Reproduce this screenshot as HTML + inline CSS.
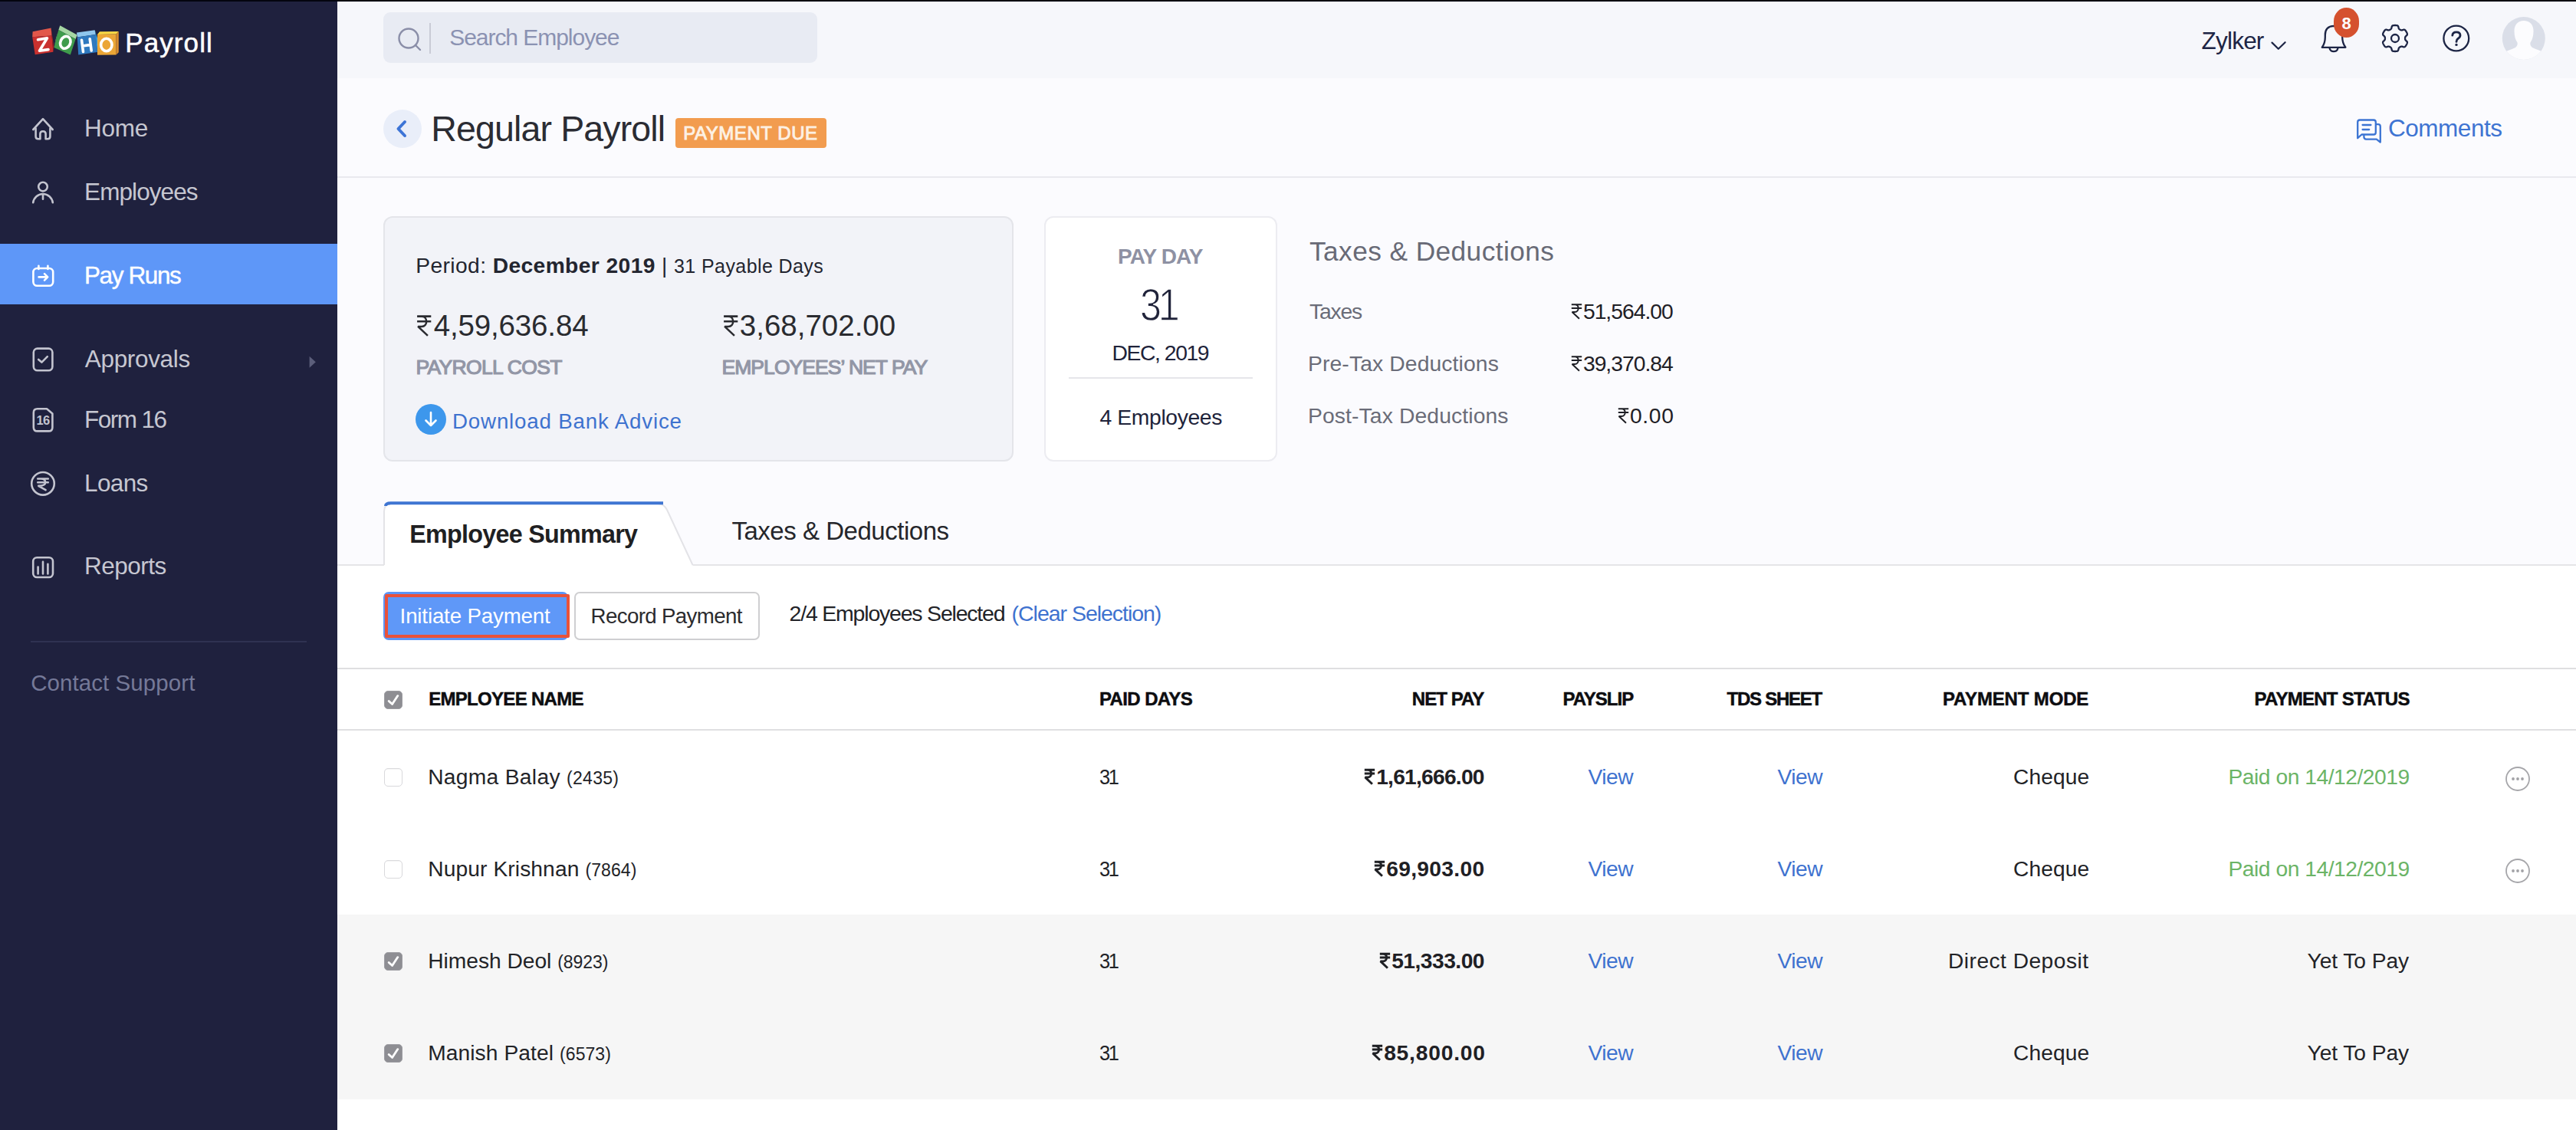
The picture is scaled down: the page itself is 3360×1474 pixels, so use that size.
<!DOCTYPE html>
<html><head><meta charset="utf-8"><title>Zoho Payroll - Regular Payroll</title>
<style>
html,body{margin:0;padding:0;}
body{width:3360px;height:1474px;overflow:hidden;background:#fff;font-family:"Liberation Sans",sans-serif;}
#root{position:relative;width:3360px;height:1474px;overflow:hidden;background:#fff;}
.t{position:absolute;white-space:nowrap;line-height:1;}
.b{position:absolute;box-sizing:border-box;}
svg{position:absolute;overflow:visible;}
.ru{position:static;display:inline-block;height:0.70em;width:0.53em;margin-right:0.05em;vertical-align:baseline;overflow:visible;}
.ic{fill:none;stroke:#c3c4cf;stroke-width:2.6;stroke-linecap:round;stroke-linejoin:round;}
.tb{fill:none;stroke:#1d2545;stroke-width:2.6;stroke-linecap:round;stroke-linejoin:round;}
</style></head><body><div id="root">

<!-- base regions -->
<div class="b" style="left:440px;top:0;width:2920px;height:102px;background:#f6f7fb;"></div>
<div class="b" style="left:440px;top:102px;width:2920px;height:635px;background:#fbfbfe;"></div>
<div class="b" style="left:440px;top:230px;width:2920px;height:2px;background:#e9e9ee;"></div>
<div class="b" style="left:440px;top:736px;width:2920px;height:2px;background:#e5e5e8;"></div>
<div class="b" style="left:440px;top:871px;width:2920px;height:2px;background:#dfdfe1;"></div>
<div class="b" style="left:440px;top:951px;width:2920px;height:2px;background:#dfdfe1;"></div>
<div class="b" style="left:440px;top:1193px;width:2920px;height:241px;background:#f6f6f6;"></div>
<!-- sidebar -->
<div class="b" style="left:0;top:0;width:440px;height:1474px;background:#1f213e;"></div>
<div class="b" style="left:0;top:318px;width:440px;height:79px;background:#5e97f8;"></div>
<div class="b" style="left:40px;top:836px;width:360px;height:2px;background:#2f3252;"></div>
<div class="b" style="left:0;top:0;width:3360px;height:2px;background:#04050f;"></div>
<!-- search -->
<div class="b" style="left:500px;top:16px;width:566px;height:66px;border-radius:9px;background:#e8ebf3;"></div>
<div class="b" style="left:560px;top:30px;width:2px;height:40px;background:#c9cbd6;"></div>
<svg style="left:516px;top:32px" width="40" height="40" viewBox="0 0 40 40"><circle cx="17" cy="18" r="12.5" fill="none" stroke="#8a8ea8" stroke-width="2.4"/><path d="M26 27 L32 33" stroke="#8a8ea8" stroke-width="2.4" stroke-linecap="round"/></svg>
<!-- back btn -->
<div class="b" style="left:500px;top:143px;width:50px;height:50px;border-radius:25px;background:#e9eef9;"></div>
<svg style="left:500px;top:143px" width="50" height="50" viewBox="0 0 50 50"><path d="M28 16 L19.5 25 L28 34" fill="none" stroke="#3d74d6" stroke-width="4" stroke-linecap="round" stroke-linejoin="round"/></svg>
<!-- badge -->
<div class="b" style="left:881px;top:154px;width:197px;height:39px;border-radius:4px;background:#f29c4f;"></div>
<!-- card 1 -->
<div class="b" style="left:500px;top:282px;width:822px;height:320px;border-radius:12px;background:#f2f3f8;border:2px solid #e4e5ea;"></div>
<div class="b" style="left:542px;top:527px;width:40px;height:40px;border-radius:20px;background:#3d97ec;"></div>
<svg style="left:542px;top:527px" width="40" height="40" viewBox="0 0 40 40"><path d="M20 11 V28 M13.5 21.5 L20 28 L26.5 21.5" fill="none" stroke="#fff" stroke-width="2.6" stroke-linecap="round" stroke-linejoin="round"/></svg>
<!-- card 2 -->
<div class="b" style="left:1362px;top:282px;width:304px;height:320px;border-radius:12px;background:#fff;border:2px solid #ececf1;"></div>
<div class="b" style="left:1394px;top:492px;width:240px;height:2px;background:#e6e6ea;"></div>
<!-- tab -->
<svg style="left:440px;top:640px" width="600" height="110" viewBox="440 640 600 110">
<path d="M501 738 L501 667 Q501 657 511 657 L858 657 Q866 657 870 665 L903.5 737 L903.5 739 L501 739 Z" fill="#fff" stroke="none"/>
<path d="M501 737 L501 667 Q501 657 511 657 L858 657 Q866 657 870 665 L903.5 737" fill="none" stroke="#e3e3e7" stroke-width="2"/>
<path d="M503 660 Q503 656.2 510 656.2 L865 656.2" fill="none" stroke="#3f75d2" stroke-width="4"/>
</svg>
<!-- buttons -->
<div class="b" style="left:500px;top:772px;width:241px;height:63px;border-radius:7px;background:#5b95f7;"></div>
<div class="b" style="left:502px;top:775px;width:241px;height:57px;border:4.5px solid #e9523a;border-radius:2px;background:#5f98f8;"></div>
<div class="b" style="left:749px;top:772px;width:242px;height:63px;border-radius:7px;background:#fff;border:2px solid #cfcfd1;"></div>

<!-- ZOHO logo -->
<svg style="left:0;top:0" width="300" height="100" viewBox="0 0 300 100">
 <!-- red -->
 <polygon points="42.6,41.3 66.6,36.4 67.5,46.5 42.2,48.3" fill="#e2574a"/>
 <polygon points="42.2,48.3 67.5,46.5 69.4,67.8 45.7,71.3" fill="#c9312f"/>
 <polygon points="66.6,36.4 67.5,46.5 69.4,67.8 70.2,60 " fill="#a3211f"/>
 <!-- green -->
 <polygon points="78.3,33.2 100.6,45.4 98.6,51 76.4,39" fill="#a5d6a3"/>
 <polygon points="78.3,33.2 76.4,39 70.4,61.9 73,50" fill="#7cc47d"/>
 <polygon points="76.4,39 98.6,51 91.8,71.6 70.4,61.9" fill="#3f9c4c"/>
 <!-- blue -->
 <polygon points="100,42.6 123.7,39.2 124.6,45 100.8,48.4" fill="#8fc6ed"/>
 <polygon points="100.8,48.4 124.6,45 127,68 102.2,71.6" fill="#2f79bf"/>
 <polygon points="123.7,39.2 124.6,45 127,68 127,50" fill="#3aa0de"/>
 <!-- yellow -->
 <polygon points="127,45 130,41.2 154.8,41 151.5,44.6" fill="#f9d845"/>
 <polygon points="127,45 151.5,44.6 151.5,71.4 127,71.7" fill="#eba636"/>
 <polygon points="151.5,44.6 154.8,41 154.8,68.2 151.5,71.4" fill="#d68b2d"/>
 <g fill="none" stroke="#fff" stroke-width="3.6" stroke-linecap="round" stroke-linejoin="round">
  <path d="M49.5 51.8 L61.5 49.8 L51.5 66.2 L63 64.6"/>
  <ellipse cx="85.3" cy="55.3" rx="6.4" ry="8.2" transform="rotate(24 85.3 55.3)"/>
  <path d="M106.5 52.3 L108.5 67.5 M117.2 50.7 L119.2 66 M107.5 60 L118.2 58.4"/>
  <ellipse cx="138.8" cy="58.5" rx="7.2" ry="8.2"/>
 </g>
</svg>
<!-- sidebar icons -->
<svg style="left:0;top:0" width="440" height="800" viewBox="0 0 440 800">
 <g class="ic">
  <!-- home -->
  <path d="M43.3 169 L56 155.2 L68.7 169"/>
  <path d="M46.6 167.5 V178 Q46.6 181.3 50 181.3 H52.4 V174.6 Q52.4 171.2 56 171.2 Q59.6 171.2 59.6 174.6 V181.3 H62 Q65.4 181.3 65.4 178 V167.5"/>
  <!-- employees -->
  <circle cx="56" cy="243.6" r="5.8"/>
  <path d="M43.2 264.3 A12.9 12.9 0 0 1 68.8 264.3 M56 254.4 V259.8"/>
  <!-- approvals -->
  <rect x="43.8" y="454.6" width="24.6" height="28.6" rx="5"/>
  <path d="M50.2 468.9 L54.4 472.6 L61.8 465.2"/>
  <!-- form 16 -->
  <path d="M48.8 533.2 H61 L68.4 539.6 V557.4 Q68.4 562.4 63.4 562.4 H48.8 Q43.8 562.4 43.8 557.4 V538.2 Q43.8 533.2 48.8 533.2 Z"/>
  <!-- loans -->
  <circle cx="56" cy="630.8" r="14.8"/>
  <path d="M49.2 624.6 H62.8 M49.2 629.2 H62.8 M53.6 624.6 Q59.2 625 59.2 629.2 Q59.2 633.6 50.2 633.8 L59.6 639.2" stroke-width="2.5"/>
  <!-- reports -->
  <rect x="43.2" y="727.2" width="25.8" height="25.8" rx="5"/>
  <path d="M49.6 739.6 V748.4 M56 732.8 V748.4 M62.4 735.8 V748.4"/>
 </g>
 <!-- pay runs -->
 <g class="ic" style="stroke:#fff">
  <rect x="43.4" y="350" width="25.8" height="22.8" rx="5"/>
  <path d="M50.4 346.8 V351 M62.4 346.8 V351 M50.6 361.4 H62 M58 357.2 L62.2 361.4 L58 365.6"/>
 </g>
 <polygon points="403.6,464.8 411.8,472.3 403.6,479.8" fill="#5b5e7a"/>
</svg>
<span class="t" style="left:47.4px;top:540px;font-size:16.5px;font-weight:700;color:#c3c4cf;letter-spacing:-0.5px;">16</span>
<!-- topbar icons -->
<svg style="left:2940px;top:0" width="420" height="100" viewBox="2940 0 420 100">
 <path class="tb" d="M2963.5 55.6 L2971.8 63.8 L2980.6 55.2" style="stroke-width:2.2"/>
 <!-- bell -->
 <path class="tb" d="M3028.8 61.8 H3059.4 Q3055.2 56.4 3055.2 48.6 V45.4 Q3055.2 34.4 3044 33.8 Q3032.8 34.4 3032.8 45.4 V48.6 Q3032.8 56.4 3028.8 61.8 Z M3038.6 63 Q3039.6 67.2 3044 67.2 Q3048.4 67.2 3049.4 63" style="stroke-width:2.3"/>
 <rect x="3044" y="10" width="33" height="39" rx="16.5" ry="17.5" fill="#d5512e"/>
 <!-- gear -->
 <g transform="translate(3124 50)">
  <path class="tb" d="M13.10 0.00 L13.10 0.46 L13.12 0.92 L13.17 1.38 L13.33 1.87 L13.71 2.42 L14.40 3.06 L15.21 3.79 L15.76 4.52 L15.93 5.18 L15.88 5.78 L15.73 6.35 L15.52 6.91 L15.27 7.45 L15.01 7.98 L14.72 8.50 L14.42 9.01 L14.09 9.50 L13.74 9.98 L13.37 10.44 L12.95 10.87 L12.45 11.21 L11.79 11.39 L10.89 11.28 L9.85 10.94 L8.95 10.66 L8.29 10.61 L7.79 10.72 L7.35 10.90 L6.95 11.12 L6.55 11.34 L6.15 11.57 L5.76 11.82 L5.39 12.10 L5.04 12.48 L4.76 13.08 L4.55 14.00 L4.32 15.07 L3.97 15.90 L3.48 16.39 L2.94 16.65 L2.36 16.80 L1.78 16.89 L1.19 16.95 L0.59 16.99 L0.00 17.00 L-0.59 16.99 L-1.19 16.95 L-1.78 16.89 L-2.36 16.80 L-2.94 16.65 L-3.48 16.39 L-3.97 15.90 L-4.32 15.07 L-4.55 14.00 L-4.76 13.08 L-5.04 12.48 L-5.39 12.10 L-5.76 11.82 L-6.15 11.57 L-6.55 11.34 L-6.95 11.12 L-7.35 10.90 L-7.79 10.72 L-8.29 10.61 L-8.95 10.66 L-9.85 10.94 L-10.89 11.28 L-11.79 11.39 L-12.45 11.21 L-12.95 10.87 L-13.37 10.44 L-13.74 9.98 L-14.09 9.50 L-14.42 9.01 L-14.72 8.50 L-15.01 7.98 L-15.27 7.45 L-15.52 6.91 L-15.73 6.35 L-15.88 5.78 L-15.93 5.18 L-15.76 4.52 L-15.21 3.79 L-14.40 3.06 L-13.71 2.42 L-13.33 1.87 L-13.17 1.38 L-13.12 0.92 L-13.10 0.46 L-13.10 0.00 L-13.10 -0.46 L-13.12 -0.92 L-13.17 -1.38 L-13.33 -1.87 L-13.71 -2.42 L-14.40 -3.06 L-15.21 -3.79 L-15.76 -4.52 L-15.93 -5.18 L-15.88 -5.78 L-15.73 -6.35 L-15.52 -6.91 L-15.27 -7.45 L-15.01 -7.98 L-14.72 -8.50 L-14.42 -9.01 L-14.09 -9.50 L-13.74 -9.98 L-13.37 -10.44 L-12.95 -10.87 L-12.45 -11.21 L-11.79 -11.39 L-10.89 -11.28 L-9.85 -10.94 L-8.95 -10.66 L-8.29 -10.61 L-7.79 -10.72 L-7.35 -10.90 L-6.95 -11.12 L-6.55 -11.34 L-6.15 -11.57 L-5.76 -11.82 L-5.39 -12.10 L-5.04 -12.48 L-4.76 -13.08 L-4.55 -14.00 L-4.32 -15.07 L-3.97 -15.90 L-3.48 -16.39 L-2.94 -16.65 L-2.36 -16.80 L-1.78 -16.89 L-1.19 -16.95 L-0.59 -16.99 L-0.00 -17.00 L0.59 -16.99 L1.19 -16.95 L1.78 -16.89 L2.36 -16.80 L2.94 -16.65 L3.48 -16.39 L3.97 -15.90 L4.32 -15.07 L4.55 -14.00 L4.76 -13.08 L5.04 -12.48 L5.39 -12.10 L5.76 -11.82 L6.15 -11.57 L6.55 -11.34 L6.95 -11.12 L7.35 -10.90 L7.79 -10.72 L8.29 -10.61 L8.95 -10.66 L9.85 -10.94 L10.89 -11.28 L11.79 -11.39 L12.45 -11.21 L12.95 -10.87 L13.37 -10.44 L13.74 -9.98 L14.09 -9.50 L14.42 -9.01 L14.72 -8.50 L15.01 -7.98 L15.27 -7.45 L15.52 -6.91 L15.73 -6.35 L15.88 -5.78 L15.93 -5.18 L15.76 -4.52 L15.21 -3.79 L14.40 -3.06 L13.71 -2.42 L13.33 -1.87 L13.17 -1.38 L13.12 -0.92 L13.10 -0.46 Z" style="stroke-width:2.3"/>
  <circle class="tb" cx="0" cy="0" r="5" style="stroke-width:2.3"/>
 </g>
 <!-- help -->
 <circle class="tb" cx="3203.8" cy="50" r="16.4" style="stroke-width:2.3"/>
 <path class="tb" d="M3198.8 46.2 Q3199 41.8 3204 41.8 Q3209 41.8 3209 46 Q3209 48.6 3206.2 50.2 Q3204 51.6 3204 54.4" style="stroke-width:2.8"/>
 <circle cx="3204" cy="58.4" r="1.7" fill="#1d2545"/>
 <!-- avatar -->
 <defs><clipPath id="av"><circle cx="3291.8" cy="50" r="28"/></clipPath></defs>
 <circle cx="3291.8" cy="50" r="28" fill="#dadee8"/>
 <g clip-path="url(#av)" fill="#fcfcfe">
  <path d="M3292 27 C3300 27 3304.5 32.5 3304.5 40.5 C3304.5 47 3303 52 3300.5 55.5 C3300 58 3300.5 60 3303 62 C3308 64.5 3314 66 3318 68.5 L3322 82 H3262 L3266 68.5 C3270 66 3276 64.5 3281 62 C3283.5 60 3284 58 3283.5 55.5 C3281 52 3279.5 47 3279.5 40.5 C3279.5 32.5 3284 27 3292 27 Z"/>
 </g>
</svg>
<!-- comments icon -->
<svg style="left:3060px;top:140px" width="60" height="60" viewBox="3060 140 60 60">
 <g fill="none" stroke="#3c74d3" stroke-width="2.3" stroke-linecap="round" stroke-linejoin="round">
  <path d="M3078 156.5 H3096 Q3098.8 156.5 3098.8 159.3 V172.7 Q3098.8 175.5 3096 175.5 H3080.4 L3075.2 180.2 V159.3 Q3075.2 156.5 3078 156.5 Z"/>
  <path d="M3081.6 163 H3092.4 M3081.6 169 H3090.2"/>
  <path d="M3099.6 162.2 H3102 Q3104.8 162.2 3104.8 165 V185.6 L3099.8 181.6 H3086.4 Q3083.4 181.6 3083.4 178.6 V177"/>
 </g>
</svg>

<!-- checkboxes -->
<div class="b" style="left:501px;top:901px;width:24px;height:24px;border-radius:5px;background:#8e8e93;border:1px solid #9d9da2;"></div>
<svg style="left:501px;top:901px" width="24" height="24" viewBox="0 0 24 24"><path d="M6.2 13.4 L10.6 17.6 L17.8 6.6" fill="none" stroke="#fff" stroke-width="2.8" stroke-linecap="round" stroke-linejoin="round"/></svg>
<div class="b" style="left:501px;top:1002px;width:24px;height:24px;border-radius:5px;background:#fff;border:1.5px solid #d9d9dc;box-shadow:inset 0 1px 1px rgba(0,0,0,0.04);"></div>
<div class="b" style="left:501px;top:1122px;width:24px;height:24px;border-radius:5px;background:#fff;border:1.5px solid #d9d9dc;box-shadow:inset 0 1px 1px rgba(0,0,0,0.04);"></div>
<div class="b" style="left:501px;top:1242px;width:24px;height:24px;border-radius:5px;background:#8e8e93;border:1px solid #9d9da2;"></div>
<svg style="left:501px;top:1242px" width="24" height="24" viewBox="0 0 24 24"><path d="M6.2 13.4 L10.6 17.6 L17.8 6.6" fill="none" stroke="#fff" stroke-width="2.8" stroke-linecap="round" stroke-linejoin="round"/></svg>
<div class="b" style="left:501px;top:1362px;width:24px;height:24px;border-radius:5px;background:#8e8e93;border:1px solid #9d9da2;"></div>
<svg style="left:501px;top:1362px" width="24" height="24" viewBox="0 0 24 24"><path d="M6.2 13.4 L10.6 17.6 L17.8 6.6" fill="none" stroke="#fff" stroke-width="2.8" stroke-linecap="round" stroke-linejoin="round"/></svg>
<!-- more buttons -->
<svg style="left:3264px;top:996px" width="40" height="40" viewBox="0 0 40 40"><circle cx="20" cy="20" r="15" fill="#fff" stroke="#a6a6aa" stroke-width="1.8"/><circle cx="14" cy="20" r="1.9" fill="#a2a2a6"/><circle cx="20" cy="20" r="1.9" fill="#a2a2a6"/><circle cx="26" cy="20" r="1.9" fill="#a2a2a6"/></svg>
<svg style="left:3264px;top:1116px" width="40" height="40" viewBox="0 0 40 40"><circle cx="20" cy="20" r="15" fill="#fff" stroke="#a6a6aa" stroke-width="1.8"/><circle cx="14" cy="20" r="1.9" fill="#a2a2a6"/><circle cx="20" cy="20" r="1.9" fill="#a2a2a6"/><circle cx="26" cy="20" r="1.9" fill="#a2a2a6"/></svg>

<span class="t" style="left:163.3px;top:37.57px;font-size:35px;color:#ffffff;letter-spacing:1.08px;-webkit-text-stroke:0.5px #fff;">Payroll</span>
<span class="t" style="left:110.0px;top:152.33px;font-size:31.5px;color:#c6c7d1;letter-spacing:-0.23px;">Home</span>
<span class="t" style="left:110.1px;top:235.33px;font-size:31.5px;color:#c6c7d1;letter-spacing:-0.93px;">Employees</span>
<span class="t" style="left:110.0px;top:343.73px;font-size:31.5px;color:#ffffff;letter-spacing:-1.40px;-webkit-text-stroke:0.4px #fff;">Pay Runs</span>
<span class="t" style="left:110.8px;top:453.33px;font-size:31.5px;color:#c6c7d1;letter-spacing:-0.34px;">Approvals</span>
<span class="t" style="left:110.0px;top:531.93px;font-size:31.5px;color:#c6c7d1;letter-spacing:-1.53px;">Form 16</span>
<span class="t" style="left:110.0px;top:615.33px;font-size:31.5px;color:#c6c7d1;letter-spacing:-0.62px;">Loans</span>
<span class="t" style="left:110.0px;top:722.83px;font-size:31.5px;color:#c6c7d1;letter-spacing:-0.50px;">Reports</span>
<span class="t" style="left:40.2px;top:876.02px;font-size:29.5px;color:#757998;letter-spacing:0.07px;">Contact Support</span>
<span class="t" style="left:586.2px;top:33.60px;font-size:30px;color:#8b92b2;letter-spacing:-1.04px;">Search Employee</span>
<span class="t" style="left:2871.6px;top:38.33px;font-size:31.5px;color:#1d2545;letter-spacing:-0.80px;">Zylker</span>
<span class="t" style="left:3054.4px;top:19.57px;font-size:22px;color:#ffffff;font-weight:700;">8</span>
<span class="t" style="left:562.3px;top:145.03px;font-size:46.5px;color:#2b2c33;letter-spacing:-0.86px;">Regular Payroll</span>
<span class="t" style="left:891.2px;top:161.58px;font-size:24px;color:#fdf1e4;letter-spacing:0.55px;-webkit-text-stroke:0.9px #fdf1e4;">PAYMENT DUE</span>
<span class="t" style="left:3115.0px;top:152.23px;font-size:31.5px;color:#3e74d2;letter-spacing:-0.47px;">Comments</span>
<span class="t" style="left:542.2px;top:331.62px;font-size:28.2px;color:#23252f;letter-spacing:0.41px;">Period: <b>December 2019</b> | <span style="font-size:25px">31 Payable Days</span></span>
<span class="t" style="left:543.4px;top:405.60px;font-size:38.5px;color:#2a2b30;letter-spacing:-0.15px;"><svg class="ru" viewBox="0 0 56 74"><path d="M3 4.5 H53 M3 22.5 H53 M12 4.5 H19 C42 4.5 42 41 19 41 H6 L41 74" fill="none" stroke="currentColor" stroke-width="7" stroke-linejoin="bevel"/></svg>4,59,636.84</span>
<span class="t" style="left:942.5px;top:405.60px;font-size:38.5px;color:#2a2b30;"><svg class="ru" viewBox="0 0 56 74"><path d="M3 4.5 H53 M3 22.5 H53 M12 4.5 H19 C42 4.5 42 41 19 41 H6 L41 74" fill="none" stroke="currentColor" stroke-width="7" stroke-linejoin="bevel"/></svg>3,68,702.00</span>
<span class="t" style="left:542.4px;top:465.56px;font-size:26.5px;color:#9296a6;letter-spacing:-0.66px;-webkit-text-stroke:1.2px #9296a6;">PAYROLL COST</span>
<span class="t" style="left:941.5px;top:465.56px;font-size:26.5px;color:#9296a6;letter-spacing:-0.94px;-webkit-text-stroke:1.2px #9296a6;">EMPLOYEES&#8217; NET PAY</span>
<span class="t" style="left:590.0px;top:536.30px;font-size:27.7px;color:#3e72cf;letter-spacing:0.83px;">Download Bank Advice</span>
<span class="t" style="left:1458.0px;top:320.69px;font-size:28px;color:#8e91a3;font-weight:700;letter-spacing:-0.88px;">PAY DAY</span>
<span class="t" style="left:1487.2px;top:367.80px;font-size:60px;color:#20233a;letter-spacing:-5px;transform:scaleX(0.84);transform-origin:left center;-webkit-text-stroke:1.3px #fff;">31</span>
<span class="t" style="left:1450.6px;top:446.04px;font-size:28.3px;color:#20233a;letter-spacing:-1.44px;">DEC, 2019</span>
<span class="t" style="left:1434.5px;top:530.34px;font-size:28.3px;color:#20233a;letter-spacing:-0.38px;">4 Employees</span>
<span class="t" style="left:1708.0px;top:309.71px;font-size:35.3px;color:#686a76;letter-spacing:0.41px;">Taxes &amp; Deductions</span>
<span class="t" style="left:1708.0px;top:391.84px;font-size:28.3px;color:#6a6c78;letter-spacing:-1.18px;">Taxes</span>
<span class="t" style="left:1706.0px;top:459.84px;font-size:28.3px;color:#6a6c78;letter-spacing:0.11px;">Pre-Tax Deductions</span>
<span class="t" style="left:1706.0px;top:528.04px;font-size:28.3px;color:#6a6c78;letter-spacing:0.11px;">Post-Tax Deductions</span>
<span class="t" style="left:2048.5px;top:391.84px;font-size:28.3px;color:#1f2026;letter-spacing:-1.00px;"><svg class="ru" viewBox="0 0 56 74"><path d="M3 4.5 H53 M3 22.5 H53 M12 4.5 H19 C42 4.5 42 41 19 41 H6 L41 74" fill="none" stroke="currentColor" stroke-width="7.5" stroke-linejoin="bevel"/></svg>51,564.00</span>
<span class="t" style="left:2048.5px;top:459.84px;font-size:28.3px;color:#1f2026;letter-spacing:-1.00px;"><svg class="ru" viewBox="0 0 56 74"><path d="M3 4.5 H53 M3 22.5 H53 M12 4.5 H19 C42 4.5 42 41 19 41 H6 L41 74" fill="none" stroke="currentColor" stroke-width="7.5" stroke-linejoin="bevel"/></svg>39,370.84</span>
<span class="t" style="left:2109.5px;top:528.04px;font-size:28.3px;color:#1f2026;letter-spacing:0.67px;"><svg class="ru" viewBox="0 0 56 74"><path d="M3 4.5 H53 M3 22.5 H53 M12 4.5 H19 C42 4.5 42 41 19 41 H6 L41 74" fill="none" stroke="currentColor" stroke-width="7.5" stroke-linejoin="bevel"/></svg>0.00</span>
<span class="t" style="left:534.2px;top:680.85px;font-size:32.3px;color:#1f1f22;font-weight:700;letter-spacing:-0.73px;">Employee Summary</span>
<span class="t" style="left:954.4px;top:675.86px;font-size:33px;color:#25262b;letter-spacing:-0.47px;">Taxes &amp; Deductions</span>
<span class="t" style="left:521.6px;top:789.95px;font-size:27.7px;color:#ffffff;letter-spacing:-0.16px;">Initiate Payment</span>
<span class="t" style="left:770.6px;top:789.95px;font-size:27.7px;color:#2b2b2e;letter-spacing:-0.65px;">Record Payment</span>
<span class="t" style="left:1029.6px;top:786.07px;font-size:28.5px;color:#222327;letter-spacing:-1.21px;">2/4 Employees Selected</span>
<span class="t" style="left:1319.6px;top:786.07px;font-size:28.5px;color:#3e72cf;letter-spacing:-1.03px;">(Clear Selection)</span>
<span class="t" style="left:559.2px;top:899.68px;font-size:24px;color:#0d0d10;font-weight:700;letter-spacing:-0.70px;-webkit-text-stroke:0.5px #0d0d10;">EMPLOYEE NAME</span>
<span class="t" style="left:1434.0px;top:899.68px;font-size:24px;color:#0d0d10;font-weight:700;letter-spacing:-0.62px;-webkit-text-stroke:0.5px #0d0d10;">PAID DAYS</span>
<span class="t" style="left:1841.8px;top:899.68px;font-size:24px;color:#0d0d10;font-weight:700;letter-spacing:-0.92px;-webkit-text-stroke:0.5px #0d0d10;">NET PAY</span>
<span class="t" style="left:2038.5px;top:899.68px;font-size:24px;color:#0d0d10;font-weight:700;letter-spacing:-1.00px;-webkit-text-stroke:0.5px #0d0d10;">PAYSLIP</span>
<span class="t" style="left:2252.5px;top:899.68px;font-size:24px;color:#0d0d10;font-weight:700;letter-spacing:-1.25px;-webkit-text-stroke:0.5px #0d0d10;">TDS SHEET</span>
<span class="t" style="left:2534.0px;top:899.68px;font-size:24px;color:#0d0d10;font-weight:700;letter-spacing:-0.15px;-webkit-text-stroke:0.5px #0d0d10;">PAYMENT MODE</span>
<span class="t" style="left:2940.5px;top:899.68px;font-size:24px;color:#0d0d10;font-weight:700;letter-spacing:-0.73px;-webkit-text-stroke:0.5px #0d0d10;">PAYMENT STATUS</span>
<span class="t" style="left:558.2px;top:998.72px;font-size:28.2px;color:#222327;letter-spacing:0.31px;">Nagma Balay <span style="font-size:23px">(2435)</span></span>
<span class="t" style="left:1434.0px;top:998.72px;font-size:28.2px;color:#222327;letter-spacing:-2.5px;transform:scaleX(0.9);transform-origin:left center;">31</span>
<span class="t" style="left:1778.8px;top:998.72px;font-size:28.2px;color:#1f2024;font-weight:700;letter-spacing:-0.75px;"><svg class="ru" viewBox="0 0 56 74"><path d="M3 4.5 H53 M3 22.5 H53 M12 4.5 H19 C42 4.5 42 41 19 41 H6 L41 74" fill="none" stroke="currentColor" stroke-width="11" stroke-linejoin="bevel"/></svg>1,61,666.00</span>
<span class="t" style="left:2071.5px;top:998.72px;font-size:28.2px;color:#3e72cf;letter-spacing:-0.50px;">View</span>
<span class="t" style="left:2318.5px;top:998.72px;font-size:28.2px;color:#3e72cf;letter-spacing:-0.50px;">View</span>
<span class="t" style="left:2626.0px;top:998.72px;font-size:28.2px;color:#222327;letter-spacing:0.10px;">Cheque</span>
<span class="t" style="left:2906.5px;top:998.72px;font-size:28.2px;color:#6bb466;letter-spacing:-0.46px;">Paid on 14/12/2019</span>
<span class="t" style="left:558.2px;top:1118.72px;font-size:28.2px;color:#222327;letter-spacing:0.10px;">Nupur Krishnan <span style="font-size:23px">(7864)</span></span>
<span class="t" style="left:1434.0px;top:1118.72px;font-size:28.2px;color:#222327;letter-spacing:-2.5px;transform:scaleX(0.9);transform-origin:left center;">31</span>
<span class="t" style="left:1791.8px;top:1118.72px;font-size:28.2px;color:#1f2024;font-weight:700;letter-spacing:0.32px;"><svg class="ru" viewBox="0 0 56 74"><path d="M3 4.5 H53 M3 22.5 H53 M12 4.5 H19 C42 4.5 42 41 19 41 H6 L41 74" fill="none" stroke="currentColor" stroke-width="11" stroke-linejoin="bevel"/></svg>69,903.00</span>
<span class="t" style="left:2071.5px;top:1118.72px;font-size:28.2px;color:#3e72cf;letter-spacing:-0.50px;">View</span>
<span class="t" style="left:2318.5px;top:1118.72px;font-size:28.2px;color:#3e72cf;letter-spacing:-0.50px;">View</span>
<span class="t" style="left:2626.0px;top:1118.72px;font-size:28.2px;color:#222327;letter-spacing:0.10px;">Cheque</span>
<span class="t" style="left:2906.5px;top:1118.72px;font-size:28.2px;color:#6bb466;letter-spacing:-0.46px;">Paid on 14/12/2019</span>
<span class="t" style="left:558.2px;top:1238.72px;font-size:28.2px;color:#222327;letter-spacing:-0.02px;">Himesh Deol <span style="font-size:23px">(8923)</span></span>
<span class="t" style="left:1434.0px;top:1238.72px;font-size:28.2px;color:#222327;letter-spacing:-2.5px;transform:scaleX(0.9);transform-origin:left center;">31</span>
<span class="t" style="left:1798.8px;top:1238.72px;font-size:28.2px;color:#1f2024;font-weight:700;letter-spacing:-0.50px;"><svg class="ru" viewBox="0 0 56 74"><path d="M3 4.5 H53 M3 22.5 H53 M12 4.5 H19 C42 4.5 42 41 19 41 H6 L41 74" fill="none" stroke="currentColor" stroke-width="11" stroke-linejoin="bevel"/></svg>51,333.00</span>
<span class="t" style="left:2071.5px;top:1238.72px;font-size:28.2px;color:#3e72cf;letter-spacing:-0.50px;">View</span>
<span class="t" style="left:2318.5px;top:1238.72px;font-size:28.2px;color:#3e72cf;letter-spacing:-0.50px;">View</span>
<span class="t" style="left:2541.0px;top:1238.72px;font-size:28.2px;color:#222327;letter-spacing:0.46px;">Direct Deposit</span>
<span class="t" style="left:3009.5px;top:1238.72px;font-size:28.2px;color:#222327;letter-spacing:-0.06px;">Yet To Pay</span>
<span class="t" style="left:558.2px;top:1358.72px;font-size:28.2px;color:#222327;letter-spacing:0.08px;">Manish Patel <span style="font-size:23px">(6573)</span></span>
<span class="t" style="left:1434.0px;top:1358.72px;font-size:28.2px;color:#222327;letter-spacing:-2.5px;transform:scaleX(0.9);transform-origin:left center;">31</span>
<span class="t" style="left:1788.8px;top:1358.72px;font-size:28.2px;color:#1f2024;font-weight:700;letter-spacing:0.80px;"><svg class="ru" viewBox="0 0 56 74"><path d="M3 4.5 H53 M3 22.5 H53 M12 4.5 H19 C42 4.5 42 41 19 41 H6 L41 74" fill="none" stroke="currentColor" stroke-width="11" stroke-linejoin="bevel"/></svg>85,800.00</span>
<span class="t" style="left:2071.5px;top:1358.72px;font-size:28.2px;color:#3e72cf;letter-spacing:-0.50px;">View</span>
<span class="t" style="left:2318.5px;top:1358.72px;font-size:28.2px;color:#3e72cf;letter-spacing:-0.50px;">View</span>
<span class="t" style="left:2626.0px;top:1358.72px;font-size:28.2px;color:#222327;letter-spacing:0.10px;">Cheque</span>
<span class="t" style="left:3009.5px;top:1358.72px;font-size:28.2px;color:#222327;letter-spacing:-0.06px;">Yet To Pay</span>
</div></body></html>
